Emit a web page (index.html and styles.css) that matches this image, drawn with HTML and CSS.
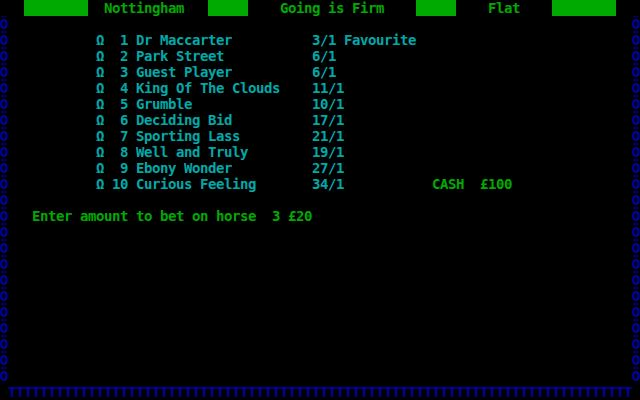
FILE: index.html
```html
<!DOCTYPE html>
<html>
<head>
<meta charset="utf-8">
<link rel="stylesheet" href="styles.css">
</head>
<body>
<div class="screen">
  <div class="topbar">
    <span class="bar bar-wide"></span>
    <span class="title t-course">Nottingham</span>
    <span class="bar bar-narrow"></span>
    <span class="title t-going">Going is Firm</span>
    <span class="bar bar-narrow"></span>
    <span class="title t-type">Flat</span>
    <span class="bar bar-wide bar-last"></span>
  </div>
  <div class="middle">
    <div class="border">Ö
Ö
Ö
Ö
Ö
Ö
Ö
Ö
Ö
Ö
Ö
Ö
Ö
Ö
Ö
Ö
Ö
Ö
Ö
Ö
Ö
Ö
Ö</div>
    <div class="content">
      <div class="runners">
        <span class="sym">Ω</span><span class="num">1</span><span class="name">Dr Maccarter</span><span class="odds">3/1 Favourite</span><span></span>
        <span class="sym">Ω</span><span class="num">2</span><span class="name">Park Street</span><span class="odds">6/1</span><span></span>
        <span class="sym">Ω</span><span class="num">3</span><span class="name">Guest Player</span><span class="odds">6/1</span><span></span>
        <span class="sym">Ω</span><span class="num">4</span><span class="name">King Of The Clouds</span><span class="odds">11/1</span><span></span>
        <span class="sym">Ω</span><span class="num">5</span><span class="name">Grumble</span><span class="odds">10/1</span><span></span>
        <span class="sym">Ω</span><span class="num">6</span><span class="name">Deciding Bid</span><span class="odds">17/1</span><span></span>
        <span class="sym">Ω</span><span class="num">7</span><span class="name">Sporting Lass</span><span class="odds">21/1</span><span></span>
        <span class="sym">Ω</span><span class="num">8</span><span class="name">Well and Truly</span><span class="odds">19/1</span><span></span>
        <span class="sym">Ω</span><span class="num">9</span><span class="name">Ebony Wonder</span><span class="odds">27/1</span><span></span>
        <span class="sym">Ω</span><span class="num">10</span><span class="name">Curious Feeling</span><span class="odds">34/1</span><span class="cash">CASH  £100</span>
      </div>
      <div class="prompt">Enter amount to bet on horse  3 £20</div>
    </div>
    <div class="border">Ö
Ö
Ö
Ö
Ö
Ö
Ö
Ö
Ö
Ö
Ö
Ö
Ö
Ö
Ö
Ö
Ö
Ö
Ö
Ö
Ö
Ö
Ö</div>
  </div>
  <div class="bottom">TTTTTTTTTTTTTTTTTTTTTTTTTTTTTTTTTTTTTTTTTTTTTTTTTTTTTTTTTTTTTTTTTTTTTTTTTTTTTT</div>
</div>
</body>
</html>
```

FILE: styles.css
```css
html, body {
  margin: 0;
  padding: 0;
  background: #000;
}

.screen {
  width: 640px;
  height: 400px;
  background: #000;
  overflow: hidden;
  font-family: "DejaVu Sans Mono", "Liberation Mono", monospace;
  font-weight: bold;
  font-size: 14px;
  letter-spacing: -0.43px;
  line-height: 16px;
  display: flex;
  flex-direction: column;
}

/* top status row */
.topbar {
  display: flex;
  height: 16px;
  padding-left: 24px;
  color: #00aa00;
}

.bar {
  display: block;
  height: 16px;
  background: #00aa00;
}

.bar-wide { width: 64px; }
.bar-narrow { width: 40px; }

.title {
  display: block;
  white-space: pre;
}
.t-course { margin: 0 24px 0 16px; }
.t-going { margin: 0 32px; }
.t-type { margin: 0 32px; }

/* middle area with side borders */
.middle {
  display: flex;
  height: 368px;
}

.border {
  width: 8px;
  color: #0000aa;
  font-size: 14px;
  letter-spacing: 0;
  line-height: 16px;
  text-align: center;
  white-space: pre;
  overflow: hidden;
}

.content {
  flex: 1;
  padding-top: 16px;
}

.runners {
  display: grid;
  grid-template-columns: 16px 16px 184px 120px auto;
  grid-auto-rows: 16px;
  margin-left: 88px;
  color: #00aaaa;
}

.runners > span { white-space: pre; }

.num { text-align: right; }
.name { padding-left: 8px; }
.cash { color: #00aa00; }

.prompt {
  margin-top: 16px;
  margin-left: 24px;
  color: #00aa00;
  white-space: pre;
}

/* bottom border row */
.bottom {
  height: 16px;
  padding-left: 8px;
  color: #0000aa;
  white-space: pre;
}
```
